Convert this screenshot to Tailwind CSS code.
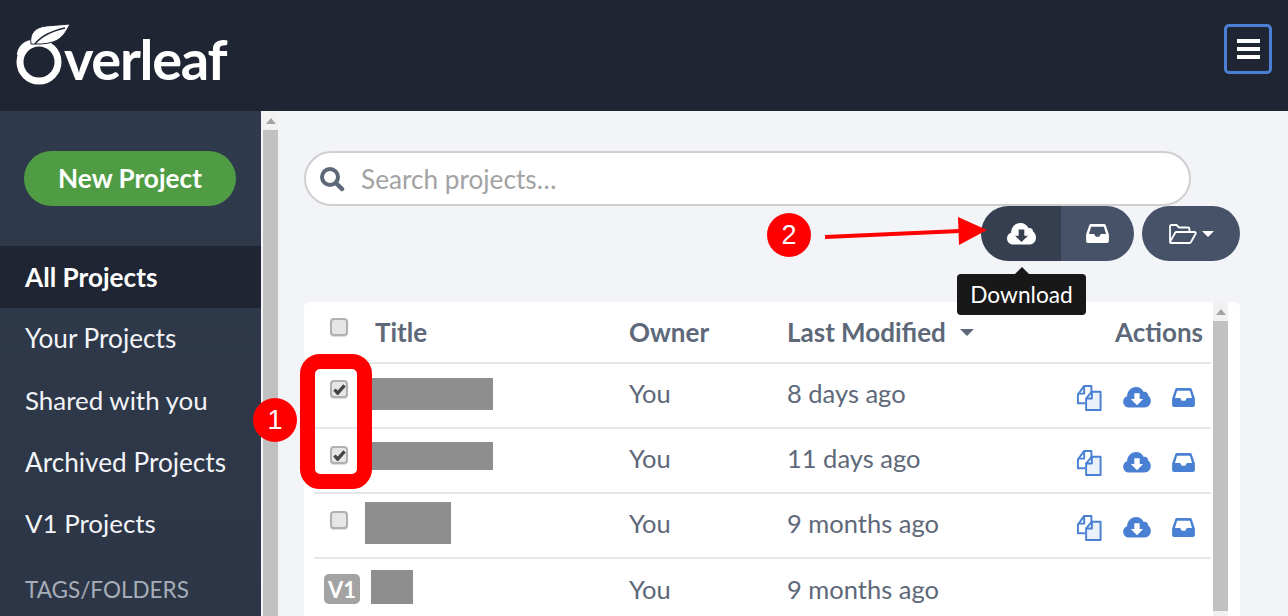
<!DOCTYPE html>
<html lang="en">

<head>
  <meta charset="UTF-8" />
  <meta name="viewport" content="width=device-width, initial-scale=1.0" />
  <script src="https://cdn.jsdelivr.net/npm/@tailwindcss/browser@4"></script>
  <title>Overleaf projects</title>
</head>

<body class="relative h-[616px] w-[1288px] overflow-hidden bg-[#f3f4f8] font-['Lato','Liberation_Sans',sans-serif] text-[26.2px] text-[#5d6879]">

  <svg width="0" height="0" class="absolute">
    <defs>
      <symbol id="cloud" viewBox="0 0 29 22">
        <path fill-rule="evenodd" fill="currentColor" d="M6.5 21.5C2.9 21.5 0 19 0 15.4c0-2.8 1.7-4.9 4.1-5.7C4.3 4.2 8.4 0 13.4 0c3.600 0 6.700 2 8.200 5.200 2.300-.6 4.500 1 4.600 3.600 1.800 1.200 2.800 3.600 2.800 5.900 0 3.800-3 6.800-6.700 6.800zM11.700 6.500v6.200H8l6.500 6.300 6.500-6.300h-3.700V6.500z" />
      </symbol>
      <symbol id="inbox" viewBox="0 0 24 20">
        <path fill-rule="evenodd" fill="currentColor" d="M5 0h14c.8 0 1.300.4 1.600 1L24 11v7c0 1.200-.9 2-2 2H2c-1.100 0-2-.8-2-2v-7L3.400 1C3.700.4 4.200 0 5 0zM5.300 3 3 10.500h5.500l1.700 3h3.600l1.700-3H21L18.700 3z" />
      </symbol>
      <symbol id="copy" viewBox="0 0 26 28">
        <path fill="none" stroke="currentColor" stroke-width="2" stroke-linejoin="round" d="M9 20H1.500v-9L8 2h7.500v7" />
        <path fill="none" stroke="currentColor" stroke-width="2" stroke-linejoin="round" d="M8 2v8H1.500" />
        <path fill="#eaf1fb" stroke="currentColor" stroke-width="2" stroke-linejoin="round" d="M16 8h9v19H10V15z" />
        <path fill="none" stroke="currentColor" stroke-width="2" stroke-linejoin="round" d="M16 8v7h-6" />
      </symbol>
      <symbol id="check" viewBox="0 0 14 12">
        <path fill="none" stroke="#444" stroke-width="3.600" d="M1.500 6 5 10l7.500-8.500" />
      </symbol>
    </defs>
  </svg>

  <header class="flex h-[111px] items-start justify-between bg-[#1f2532]">
    <div class="ml-[16px] mt-[24px] flex items-start text-white">
      <svg width="54" height="61" viewBox="16 24 54 61" class="shrink-0">
        <circle cx="39" cy="62" r="19" fill="none" stroke="white" stroke-width="7" />
        <path fill="none" stroke="white" stroke-width="4.500" d="M19 55C20 47 26 42 34 42" />
        <path fill="white" stroke="#1f2532" stroke-width="1" d="M31 44C29 33 36 27 46 26L70 24C66 32 62 39 53 42 45 44.500 38 44 31 44z" />
        <path fill="none" stroke="#1f2532" stroke-width="1.500" d="M35 44C41 36 52 31 65 28" />
      </svg>
      <span class="ml-[-6px] mt-[5px] text-[56px] font-bold leading-[60px] tracking-[-1.300px]">verleaf</span>
    </div>
    <div class="mr-[16px] mt-[24px] flex h-[50px] w-[48px] flex-col items-center justify-center gap-[4px] rounded-[5px] border-[3px] border-[#4a80d3]">
      <span class="h-[4px] w-[23px] bg-white"></span>
      <span class="h-[4px] w-[23px] bg-white"></span>
      <span class="h-[4px] w-[23px] bg-white"></span>
    </div>
  </header>

  <div class="flex h-[505px]">
    <aside class="h-full w-[261px] shrink-0 bg-gradient-to-b from-[#2f3a4c] to-[#2c3646] pt-[40px] text-[#f3f4f8]">
      <div class="mx-[24px] flex h-[55px] w-[212px] items-center justify-center rounded-full bg-[#4f9c45] font-bold text-white">New Project</div>
      <ul class="mt-[40px]">
        <li class="flex h-[62px] items-center bg-[#1f2532] pl-[25px] pt-[2px] font-bold text-white">All Projects</li>
        <li class="flex h-[62px] items-center pl-[25px]">Your Projects</li>
        <li class="flex h-[62px] items-center pb-[2px] pl-[25px] text-[25.9px]">Shared with you</li>
        <li class="flex h-[62px] items-center pl-[25px]">Archived Projects</li>
        <li class="flex h-[62px] items-center pb-[3px] pl-[25px] text-[25.9px]">V1 Projects</li>
      </ul>
      <div class="mt-[19px] pl-[25px] text-[22.500px] leading-[30px] text-[#a7adb8]">TAGS/FOLDERS</div>
    </aside>

    <div class="ml-[2px] h-full w-[15px] shrink-0 bg-[#f1f1f1]">
      <div class="mx-auto mt-[7px] h-0 w-0 border-x-[5px] border-b-[6px] border-x-transparent border-b-[#a3a3a3]"></div>
      <div class="mt-[6px] h-[486px] bg-[#c1c1c1]"></div>
    </div>

    <main class="flex-1 pl-[26px] pr-[48px] pt-[40px]">
      <div class="flex h-[55px] w-[887px] items-center rounded-full border-2 border-[#cfcfcf] bg-white pl-[13px] text-[#a3a3a3]">
        <svg width="26" height="26" viewBox="0 0 26 26" class="shrink-0 text-[#5d6879]">
          <circle cx="11" cy="11" r="8" fill="none" stroke="currentColor" stroke-width="4" />
          <path stroke="currentColor" stroke-width="4.500" stroke-linecap="round" d="m17 17 6 6" />
        </svg>
        <span class="ml-[16px] pt-[2px]">Search projects…</span>
      </div>

      <div class="flex h-[55px] justify-end gap-[8px] pr-0">
        <div class="flex overflow-hidden rounded-full text-white">
          <div class="flex h-[55px] w-[80px] items-center justify-center bg-[#353f50]">
            <svg width="29" height="22"><use href="#cloud" /></svg>
          </div>
          <div class="flex h-[55px] w-[73px] items-center justify-center bg-[#465268]">
            <svg width="23" height="19"><use href="#inbox" /></svg>
          </div>
        </div>
        <div class="flex h-[55px] w-[98px] items-center justify-center gap-[5px] rounded-full bg-[#465268] text-white">
          <svg width="28" height="20" viewBox="0 0 28 20">
            <path fill="none" stroke="currentColor" stroke-width="1.800" stroke-linejoin="round" d="M1 18V2.500C1 1.500 1.600 1 2.500 1h5L10 3.500h9c.9 0 1.400.6 1.400 1.400V8M1 18l5-9c.4-.7 1-1 1.800-1H25.500c1 0 1.600 1 1.100 1.800L22 18c-.3.6-.9 1-1.600 1H2c-.6 0-1-.4-1-1z" />
          </svg>
          <span class="h-0 w-0 border-x-[6px] border-t-[6px] border-x-transparent border-t-white"></span>
        </div>
      </div>

      <section class="mt-[41px] h-[314px] w-[936px] overflow-hidden rounded-t-[6px] bg-white pl-[10px]">
        <div class="flex">
          <div class="w-[897px] text-[25.5px]">
            <div class="flex h-[62px] items-center border-b-2 border-[#e4e6ec] text-[26px] font-bold">
              <div class="w-[61px] pb-[10px] pl-[16px]"><span class="block size-[18px] rounded-[4px] border-2 border-[#b0b0b0] bg-[#e6e6e6] shadow-[0_1px_1px_#ddd]"></span></div>
              <div class="w-[254px]">Title</div>
              <div class="w-[158px]">Owner</div>
              <div class="flex w-[300px] items-center gap-[14px]">Last Modified <span class="h-0 w-0 border-x-[7px] border-t-[7px] border-x-transparent border-t-[#5d6879]"></span></div>
              <div class="w-[124px] pr-[8px] text-right">Actions</div>
            </div>

            <div class="flex h-[65px] items-center border-b-2 border-[#e4e6ec] pb-[4px]">
              <div class="w-[58px] self-start pl-[16px] pt-[16px]"><span class="flex size-[18px] items-center justify-center rounded-[4px] border-2 border-[#b0b0b0] bg-[#e6e6e6] shadow-[0_1px_1px_#ddd]"><svg width="13" height="11"><use href="#check" /></svg></span></div>
              <div class="w-[257px] self-start pt-[14px]"><div class="h-[32px] w-[121px] bg-[#8e8e8e]"></div></div>
              <div class="w-[158px]">You</div>
              <div class="w-[289px]">8 days ago</div>
              <div class="mt-[8px] flex items-center gap-[21px] text-[#4a80d3]">
                <svg width="26" height="27"><use href="#copy" /></svg>
                <svg width="28" height="21"><use href="#cloud" /></svg>
                <svg width="23" height="19"><use href="#inbox" /></svg>
              </div>
            </div>

            <div class="flex h-[65px] items-center border-b-2 border-[#e4e6ec] pb-[4px]">
              <div class="w-[58px] self-start pl-[16px] pt-[17px]"><span class="flex size-[18px] items-center justify-center rounded-[4px] border-2 border-[#b0b0b0] bg-[#e6e6e6] shadow-[0_1px_1px_#ddd]"><svg width="13" height="11"><use href="#check" /></svg></span></div>
              <div class="w-[257px] self-start pt-[13px]"><div class="h-[28px] w-[121px] bg-[#8e8e8e]"></div></div>
              <div class="w-[158px]">You</div>
              <div class="w-[289px]">11 days ago</div>
              <div class="mt-[8px] flex items-center gap-[21px] text-[#4a80d3]">
                <svg width="26" height="27"><use href="#copy" /></svg>
                <svg width="28" height="21"><use href="#cloud" /></svg>
                <svg width="23" height="19"><use href="#inbox" /></svg>
              </div>
            </div>

            <div class="flex h-[65px] items-center border-b-2 border-[#e4e6ec] pb-[4px]">
              <div class="w-[51px] self-start pl-[16px] pt-[17px]"><span class="block size-[18px] rounded-[4px] border-2 border-[#b0b0b0] bg-[#e6e6e6] shadow-[0_1px_1px_#ddd]"></span></div>
              <div class="w-[264px] self-start pt-[8px]"><div class="h-[42px] w-[86px] bg-[#8e8e8e]"></div></div>
              <div class="w-[158px]">You</div>
              <div class="w-[289px]">9 months ago</div>
              <div class="mt-[8px] flex items-center gap-[21px] text-[#4a80d3]">
                <svg width="26" height="27"><use href="#copy" /></svg>
                <svg width="28" height="21"><use href="#cloud" /></svg>
                <svg width="23" height="19"><use href="#inbox" /></svg>
              </div>
            </div>

            <div class="flex h-[57px] items-start">
              <div class="w-[57px] pl-[10px] pt-[15px]"><span class="flex h-[30px] w-[36px] items-center justify-center rounded-[5px] bg-[#a3a3a3] text-[22px] font-bold text-white">V1</span></div>
              <div class="w-[258px] pt-[11px]"><div class="h-[34px] w-[42px] bg-[#8e8e8e]"></div></div>
              <div class="w-[158px] pt-[11px]">You</div>
              <div class="pt-[11px]">9 months ago</div>
            </div>
          </div>

          <div class="ml-[2px] h-[314px] w-[15px] bg-[#f1f1f1]">
            <div class="mx-auto mt-[7px] h-0 w-0 border-x-[5px] border-b-[6px] border-x-transparent border-b-[#a3a3a3]"></div>
            <div class="mt-[6px] h-[290px] bg-[#c1c1c1]"></div>
          </div>
        </div>
      </section>
    </main>
  </div>

  <!-- tooltip -->
  <div class="absolute left-[957px] top-[267px]">
    <div class="mx-auto h-0 w-0 border-x-[7px] border-b-[7px] border-x-transparent border-b-[#181818]"></div>
    <div class="flex h-[41px] w-[129px] items-center justify-center rounded-[4px] bg-[#181818] pt-[2px] text-[22.700px] text-white">Download</div>
  </div>

  <!-- annotations -->
  <div class="absolute left-[300px] top-[354px] h-[135px] w-[72px] rounded-[20px] border-[15px] border-[#ff0000]"></div>
  <div class="absolute left-[253px] top-[398px] flex size-[44px] items-center justify-center rounded-full bg-[#ff0000] font-['Liberation_Sans',sans-serif] text-[27px] text-white">1</div>
  <div class="absolute left-[767px] top-[213px] flex size-[44px] items-center justify-center rounded-full bg-[#ff0000] font-['Liberation_Sans',sans-serif] text-[27px] text-white">2</div>
  <svg class="absolute left-[820px] top-[212px]" width="170" height="36" viewBox="0 0 170 36">
    <path stroke="#ff0000" stroke-width="4" d="M5 25 140 19" />
    <path fill="#ff0000" d="M138 5 167 18 139 33z" />
  </svg>

</body>

</html>
